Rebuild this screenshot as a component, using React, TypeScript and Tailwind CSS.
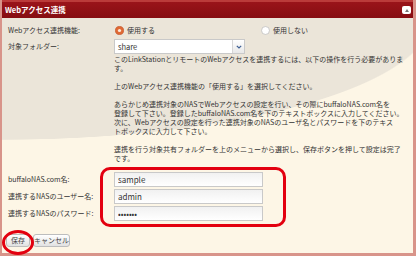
import React from 'react';

const labelCls = 'text-[7px] leading-[11px] text-[#333]';

const TextField: React.FC<{ value: string; type?: string }> = ({ value, type = 'text' }) => (
  <input
    readOnly
    type={type}
    defaultValue={value}
    className="block h-[15px] w-[149px] border border-[#c9c9c9] bg-gradient-to-b from-[#f1f1f1] to-white px-[3px] text-[8px] text-[#333] outline-none"
  />
);

const Radio: React.FC<{ checked?: boolean }> = ({ checked }) =>
  checked ? (
    <svg width="9" height="9" viewBox="0 0 10 10">
      <circle cx="5" cy="5" r="4.5" fill="#e06a35" stroke="#c4542a" strokeWidth="0.8" />
      <circle cx="5" cy="5" r="1.8" fill="#fde9dc" />
    </svg>
  ) : (
    <svg width="9" height="9" viewBox="0 0 10 10">
      <circle cx="5" cy="5" r="4.4" fill="#fff" stroke="#b9b9b9" strokeWidth="0.8" />
    </svg>
  );

const App: React.FC = () => {
  return (
    <div className="h-[256px] w-[416px] overflow-hidden font-['Noto_Sans_CJK_JP',sans-serif]">
      <div className="flex h-full flex-col border-b-[3px] border-l-2 border-r-[3px] border-[#d8948a]">
        {/* title bar */}
        <div className="flex h-[18px] items-center justify-between border-t-[2px] border-[#bb3b3a] bg-gradient-to-b from-[#9a141a] to-[#860d12] pl-[3px] pr-[2px]">
          <span className="text-[7.5px] font-bold leading-none text-white">Webアクセス連携</span>
          <div className="flex h-[8px] w-[9px] items-center justify-center rounded-[2px] bg-white">
            <div className="h-0 w-0 border-x-[2.5px] border-b-[3px] border-x-transparent border-b-[#777]" />
          </div>
        </div>

        {/* body */}
        <div className="relative flex-1 bg-[radial-gradient(ellipse_430px_122px_at_0_0,#ebe5d9_99.5%,#fdf6e6_100%)] px-[4px] pt-[5px]">
          <div className="grid grid-cols-[106px_minmax(0,1fr)] pl-[2px]">
            <div className={`flex h-[15px] items-center ${labelCls}`}>Webアクセス連携機能:</div>
            <div className="flex h-[15px] items-center">
              <div className="flex w-[147px] items-center gap-[3px] pl-[1px]">
                <Radio checked />
                <span className={labelCls}>使用する</span>
              </div>
              <div className="flex items-center gap-[3px]">
                <Radio />
                <span className={labelCls}>使用しない</span>
              </div>
            </div>

            <div className={`mt-[1px] flex h-[15px] items-center ${labelCls}`}>対象フォルダー:</div>
            <div className="mt-[1px] flex h-[15px] w-[131px] items-center border border-[#c9c9c9] bg-white">
              <span className="flex-1 pl-[3px] text-[7.5px] leading-none text-[#333]">share</span>
              <div className="flex h-full w-[12px] items-center justify-center border-l border-[#d6d6d6] bg-gradient-to-b from-white to-[#e8e8e8]">
                <svg width="6" height="4" viewBox="0 0 6 4">
                  <path d="M0.8 0.8 L3 3 L5.2 0.8" fill="none" stroke="#3d5f93" strokeWidth="1.2" />
                </svg>
              </div>
            </div>

            <div />
            <div className="mt-[1px] whitespace-nowrap text-[7px] leading-[9px] text-[#333]">
              <p>このLinkStationとリモートのWebアクセスを連携するには、以下の操作を行う必要がありま</p>
              <p>す。</p>
              <p className="mt-[9px]">上のWebアクセス連携機能の「使用する」を選択してください。</p>
              <p className="mt-[9px]">あらかじめ連携対象のNASでWebアクセスの設定を行い、その際にbuffaloNAS.com名を</p>
              <p>登録して下さい。登録したbuffaloNAS.com名を下のテキストボックスに入力してください。</p>
              <p>次に、Webアクセスの設定を行った連携対象のNASのユーザ名とパスワードを下のテキス</p>
              <p>トボックスに入力して下さい。</p>
              <p className="mt-[9px]">連携を行う対象共有フォルダーを上のメニューから選択し、保存ボタンを押して設定は完了</p>
              <p>です。</p>
            </div>

            <div className={`mt-[9px] flex h-[15px] items-center ${labelCls}`}>buffaloNAS.com名:</div>
            <div className="mt-[9px] flex">
              <TextField value="sample" />
            </div>
            <div className={`mt-[2px] flex h-[15px] items-center ${labelCls}`}>連携するNASのユーザー名:</div>
            <div className="mt-[2px] flex">
              <TextField value="admin" />
            </div>
            <div className={`mt-[2px] flex h-[15px] items-center ${labelCls}`}>連携するNASのパスワード:</div>
            <div className="mt-[2px] flex">
              <TextField value="passwor" type="password" />
            </div>
          </div>

          <div className="mt-[13px] flex gap-[3px]">
            <button className="h-[13px] w-[24px] rounded-[3px] border border-[#bdbdbd] bg-gradient-to-b from-white to-[#e2e2e2] text-[7px] leading-none text-[#444]">
              保存
            </button>
            <button className="h-[13px] w-[37px] rounded-[3px] border border-[#bdbdbd] bg-gradient-to-b from-white to-[#e2e2e2] text-[7px] leading-none text-[#444]">
              キャンセル
            </button>
          </div>

          {/* red annotation marks */}
          <div className="pointer-events-none absolute left-[98px] top-[149px] h-[60px] w-[186px] rounded-[10px] border-[3px] border-[#e3000f]" />
          <div className="pointer-events-none absolute left-[0px] top-[212px] h-[25px] w-[32px] rounded-[50%] border-[3px] border-[#e3000f]" />
        </div>
      </div>
    </div>
  );
};

export default App;
